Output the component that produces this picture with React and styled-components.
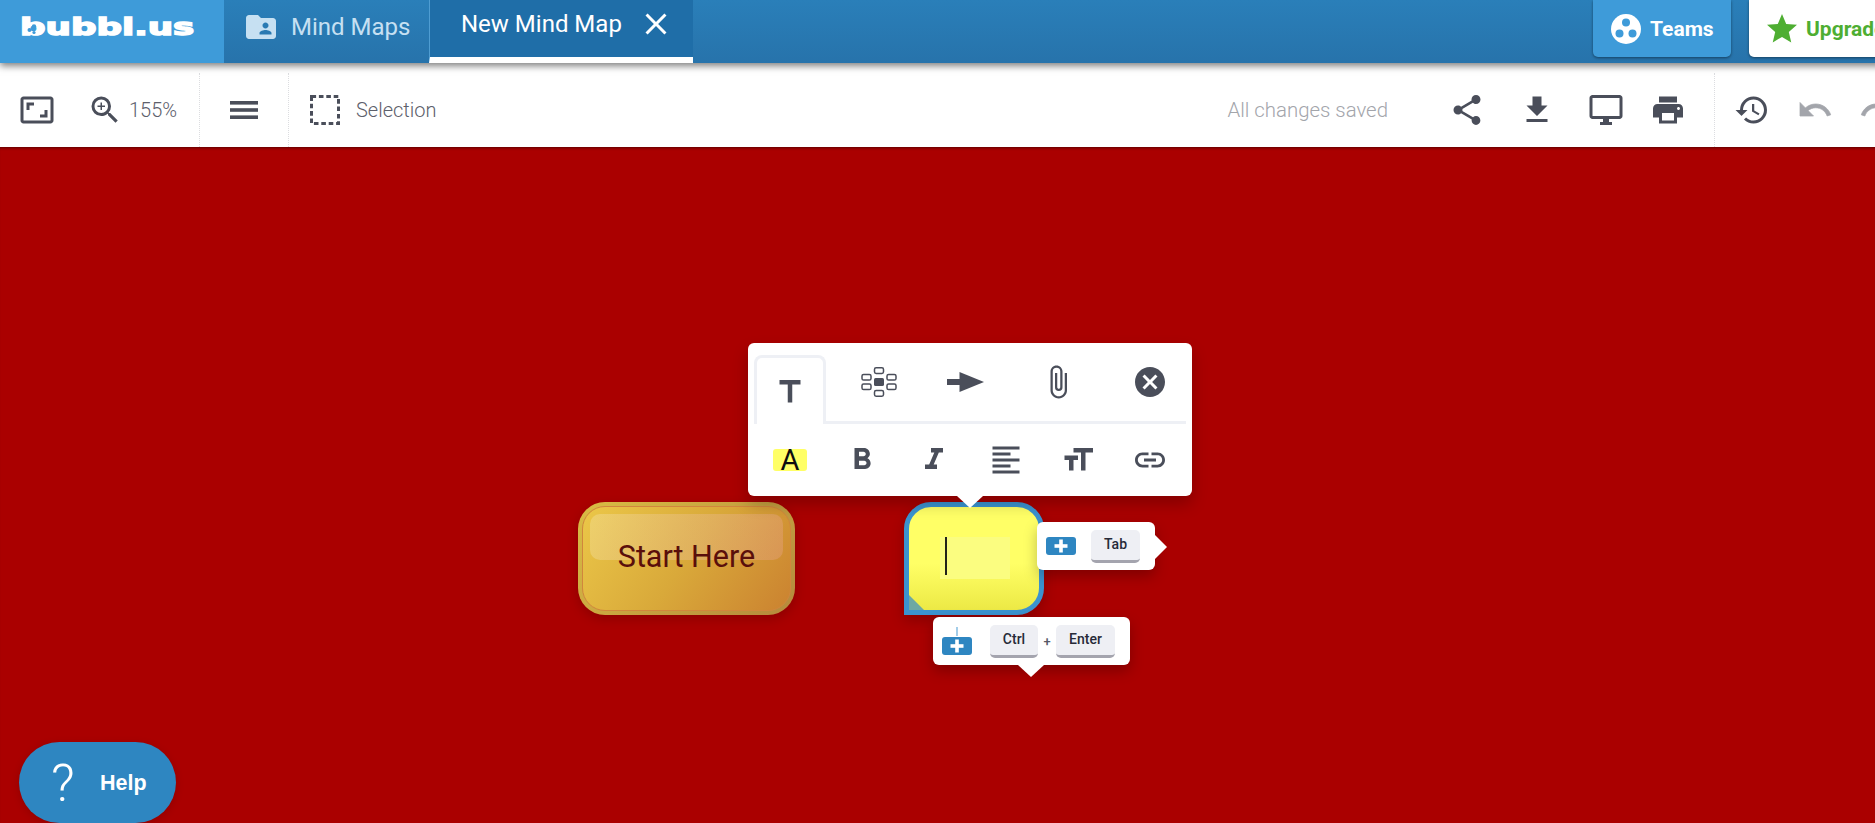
import React from 'react';
import styled, { createGlobalStyle } from 'styled-components';
import {
  MdAspectRatio,
  MdAttachFile,
  MdCancel,
  MdClose,
  MdFileDownload,
  MdFolderShared,
  MdFormatAlignLeft,
  MdFormatBold,
  MdFormatItalic,
  MdFormatSize,
  MdHistory,
  MdLink,
  MdOutlineDesktopWindows,
  MdPrint,
  MdShare,
  MdStar,
  MdTitle,
  MdZoomIn,
} from 'react-icons/md';

const GlobalStyle = createGlobalStyle`
    html, body {
        margin: 0;
        height: 100%;
        overflow: hidden;
        font-family: Roboto, "Liberation Sans", sans-serif;
    }
    #root {
        height: 100%;
    }
`;

const Page = styled.div`
    display: flex;
    flex-direction: column;
    height: 100vh;
    overflow: hidden;
`;

// header
const Header = styled.header`
    position: relative;
    z-index: 2;
    display: flex;
    flex: 0 0 63px;
    width: calc(100% + 44px);
    background: linear-gradient(#2a7fb9, #2773ab);
    box-shadow: 0 3px 7px rgba(0, 0, 0, 0.5);
`;

const LogoCell = styled.div`
    position: relative;
    display: flex;
    align-items: center;
    flex: 0 0 224px;
    padding-left: 20px;
    box-sizing: border-box;
    background: #3e9bd9;
`;

const LogoText = styled.span`
    display: inline-block;
    font-family: "DejaVu Sans", sans-serif;
    font-weight: 700;
    font-size: 23px;
    line-height: 1;
    color: #fff;
    -webkit-text-stroke: 1.4px #fff;
    transform: scaleX(1.55);
    transform-origin: left center;
    margin-top: -8px;
`;

const LogoBubbles = styled.svg`
    position: absolute;
    left: 26px;
    top: 24px;
    width: 12px;
    height: 11px;
`;

const MapsTab = styled.div`
    display: flex;
    align-items: center;
    flex: 0 0 205px;
    box-sizing: border-box;
    padding-left: 19px;
    padding-bottom: 9px;
    color: #c6e0f2;
    font-size: 24px;
    gap: 12px;
`;

const ActiveTab = styled.div`
    display: flex;
    align-items: center;
    flex: 0 0 264px;
    box-sizing: border-box;
    padding: 0 0 9px 31px;
    background: #1f6ea8;
    border-left: 1px solid #4f9dd2;
    border-bottom: 6px solid #fff;
    color: #fff;
    font-size: 24px;
    gap: 16px;
`;

const HeaderSpacer = styled.div`
    flex: 1;
`;

const HeaderButton = styled.div`
    display: flex;
    align-items: center;
    flex: 0 0 ${(p) => p.$width}px;
    box-sizing: border-box;
    height: 57px;
    margin-left: 18px;
    padding-left: ${(p) => p.$pad}px;
    gap: ${(p) => p.$gap}px;
    border-radius: 0 0 5px 5px;
    background: ${(p) => (p.$light ? '#fff' : '#3e9bd9')};
    color: ${(p) => (p.$light ? '#4eae32' : '#fff')};
    box-shadow: 0 1px 3px rgba(0, 0, 0, 0.45);
    font-weight: 700;
    font-size: 21px;
`;

const TeamsBadge = styled.svg`
    width: 30px;
    height: 30px;
`;

// toolbar
const Toolbar = styled.div`
    position: relative;
    z-index: 1;
    display: flex;
    flex: 0 0 84px;
    width: calc(100% + 20px);
    padding-top: 10px;
    box-sizing: border-box;
    background: #fff;
    color: #4a4e5a;
`;

const ToolGroup = styled.div`
    display: flex;
    align-items: center;
    flex: 0 0 auto;
    box-sizing: border-box;
    width: ${(p) => (p.$width ? `${p.$width}px` : 'auto')};
    padding-left: ${(p) => p.$pad || 0}px;
    border-right: ${(p) => (p.$divider ? '1px dotted #dcdde0' : 'none')};
`;

const ToolIcon = styled.svg`
    flex: 0 0 auto;
    width: 36px;
    height: 36px;
    margin-left: ${(p) => p.$ml || 0}px;
    color: ${(p) => p.$color || 'inherit'};
`;

const ToolLabel = styled.span`
    margin-left: ${(p) => p.$ml}px;
    font-size: 20px;
    font-weight: 300;
    color: #5d606b;
`;

const SaveStatus = styled.span`
    margin-left: auto;
    margin-right: 36px;
    align-self: center;
    font-size: 20.4px;
    font-weight: 300;
    color: #a3a5ab;
`;

const SelectionBox = styled.svg`
    flex: 0 0 auto;
    width: 30px;
    height: 30px;
`;

// canvas
const Canvas = styled.main`
    position: relative;
    flex: 1;
    overflow: hidden;
    background: #aa0000;
    box-shadow: inset 0 3px 3px -2px rgba(0, 0, 0, 0.45);
`;

const StartNode = styled.div`
    position: absolute;
    left: 578px;
    top: 355px;
    width: 217px;
    height: 113px;
    box-sizing: border-box;
    padding: 4px;
    border-radius: 27px;
    background: linear-gradient(135deg, #d9bc44, #b5893c);
    box-shadow: 0 4px 12px rgba(0, 0, 0, 0.18);
`;

const StartFace = styled.div`
    position: relative;
    display: flex;
    align-items: center;
    justify-content: center;
    height: 100%;
    border-radius: 23px;
    box-sizing: border-box;
    border: 1px solid #d1863c;
    background: linear-gradient(125deg, #ebc748 0%, #d9a93a 50%, #cb8230 100%);
    color: #5a0f0b;
    font-size: 30.5px;
    padding-bottom: 4px;
`;

const StartGloss = styled.div`
    position: absolute;
    left: 7px;
    right: 7px;
    top: 7px;
    height: 46px;
    border-radius: 10px;
    background: linear-gradient(90deg, rgba(255, 255, 255, 0.2), rgba(240, 170, 170, 0.28));
`;

const StartLabel = styled.span`
    position: relative;
`;

const EditNode = styled.div`
    position: absolute;
    left: 904px;
    top: 355px;
    width: 140px;
    height: 113px;
    box-sizing: border-box;
    border: 5px solid #3b93cf;
    border-radius: 27px 27px 27px 0;
    background: linear-gradient(#ffff66 0%, #ffff66 55%, #ece945 100%);
    overflow: hidden;
    box-shadow: 0 6px 14px rgba(0, 0, 0, 0.2);
`;

const EditField = styled.div`
    position: absolute;
    left: 31px;
    top: 30px;
    width: 70px;
    height: 42px;
    background: #fbfd80;
`;

const Caret = styled.div`
    width: 2px;
    height: 38px;
    margin-left: 5px;
    background: #22221a;
`;

const ResizeCorner = styled.div`
    position: absolute;
    left: 0;
    bottom: 0;
    width: 0;
    height: 0;
    border-style: solid;
    border-width: 15px 0 0 15px;
    border-color: transparent transparent transparent #6da8a3;
`;

const Popup = styled.div`
    position: absolute;
    z-index: 3;
    left: 748px;
    top: 196px;
    width: 444px;
    height: 153px;
    box-sizing: border-box;
    padding: 12px 6px 0;
    border-radius: 6px;
    background: #fff;
    color: #4a4e5a;
    box-shadow: 0 8px 16px rgba(0, 0, 0, 0.22);
`;

const Pointer = styled.div`
    position: absolute;
    width: 0;
    height: 0;
    border-style: solid;
    border-color: transparent;
    ${(p) =>
      p.$right
        ? `
        right: -12px;
        top: 13px;
        border-width: 12px 0 12px 12px;
        border-left-color: #fff;
    `
        : `
        left: ${p.$left}px;
        bottom: -12px;
        border-width: 12px 13px 0;
        border-top-color: #fff;
    `}
`;

const TabRow = styled.div`
    display: grid;
    grid-template-columns: repeat(5, 72px);
    column-gap: 18px;
    height: 69px;
    border-bottom: 3px solid #eef0f5;
    box-sizing: border-box;
`;

const PopupTab = styled.div`
    display: flex;
    align-items: center;
    justify-content: center;
    box-sizing: border-box;
    height: 66px;
    padding-bottom: 12px;
    margin-left: ${(p) => p.$nudge || 0}px;
    ${(p) =>
      p.$active &&
      `
        position: relative;
        height: 69px;
        padding-bottom: 0;
        padding-top: 1px;
        background: #fff;
        border: 3px solid #eef0f5;
        border-bottom: none;
        border-radius: 8px 8px 0 0;
    `}
`;

const FormatRow = styled.div`
    display: grid;
    grid-template-columns: repeat(6, 72px);
    height: 72px;
`;

const FormatCell = styled.div`
    display: flex;
    align-items: center;
    justify-content: center;
`;

const ColorSwatch = styled.span`
    display: flex;
    align-items: center;
    justify-content: center;
    width: 34px;
    height: 22px;
    border-radius: 3px;
    background: #ffff66;
    color: #0c0c10;
    font-size: 29px;
    font-weight: 400;
    line-height: 22px;
`;

const HintTip = styled.div`
    position: absolute;
    z-index: 3;
    display: flex;
    align-items: center;
    box-sizing: border-box;
    left: ${(p) => p.$x}px;
    top: ${(p) => p.$y}px;
    width: ${(p) => p.$width}px;
    height: 48px;
    padding-left: 9px;
    border-radius: 6px;
    background: #fff;
    box-shadow: 0 6px 14px rgba(0, 0, 0, 0.25);
`;

const PlusBadge = styled.span`
    position: relative;
    display: flex;
    align-items: center;
    justify-content: center;
    width: 30px;
    height: 18px;
    border-radius: 3px;
    background: #2e86c1;
    color: #fff;
    ${(p) =>
      p.$stem &&
      `
        margin-top: 10px;
        &::before {
            content: '';
            position: absolute;
            left: 14px;
            top: -10px;
            width: 2px;
            height: 9px;
            background: #a3cde9;
        }
    `}
`;

const Key = styled.span`
    display: flex;
    align-items: center;
    justify-content: center;
    box-sizing: border-box;
    width: ${(p) => p.$width}px;
    height: 33px;
    margin-left: ${(p) => p.$ml}px;
    padding-bottom: 2px;
    border-radius: 5px;
    border-bottom: 3px solid #a4a4ae;
    background: #eeeff4;
    color: #262a38;
    font-size: 14px;
    font-weight: 500;
`;

const KeyJoin = styled.span`
    width: 18px;
    text-align: center;
    font-size: 13px;
    font-weight: 500;
    color: #555866;
`;

const HelpButton = styled.div`
    position: absolute;
    z-index: 3;
    left: 19px;
    top: 595px;
    display: flex;
    align-items: center;
    box-sizing: border-box;
    width: 157px;
    height: 81px;
    padding-left: 32px;
    border-radius: 41px;
    background: #2e86c1;
    color: #fff;
    box-shadow: 0 2px 8px rgba(0, 0, 0, 0.15);
`;

const HelpMark = styled.span`
    width: 49px;
    padding-top: 3px;
    font-size: 52px;
    font-weight: 300;
    line-height: 1;
`;

const HelpLabel = styled.span`
    font-family: "Liberation Sans", Arial, sans-serif;
    font-size: 21.5px;
    font-weight: 700;
    padding-top: 1px;
`;

const PlusGlyph = () => (
  <svg width="14" height="14" viewBox="0 0 14 14" fill="currentColor">
    <rect x="5.2" y="0.5" width="3.6" height="13" />
    <rect x="0.5" y="5.2" width="13" height="3.6" />
  </svg>
);

const MapIcon = () => (
  <svg width="36" height="30" viewBox="0 0 36 30" fill="none" stroke="currentColor" strokeWidth="1.5">
    <rect x="13.5" y="0.8" width="9" height="5.6" rx="1.6" />
    <rect x="13.5" y="23.6" width="9" height="5.6" rx="1.6" />
    <rect x="1" y="7.4" width="9" height="5.6" rx="1.6" />
    <rect x="1" y="17" width="9" height="5.6" rx="1.6" />
    <rect x="26" y="7.4" width="9" height="5.6" rx="1.6" />
    <rect x="26" y="17" width="9" height="5.6" rx="1.6" />
    <rect x="13" y="11" width="10" height="8" rx="1.6" fill="currentColor" stroke="none" />
  </svg>
);

const ArrowIcon = () => (
  <svg width="37" height="20" viewBox="0 0 37 20" fill="currentColor">
    <rect x="0" y="7" width="14" height="6" />
    <path d="M12.500 0 L37 10 L12.500 20 Z" />
  </svg>
);

const MenuBars = (props) => (
  <svg viewBox="0 0 36 36" fill="currentColor" {...props}>
    <rect x="4" y="9" width="28" height="3.600" />
    <rect x="4" y="16.200" width="28" height="3.600" />
    <rect x="4" y="23.400" width="28" height="3.600" />
  </svg>
);

// the history arrows sit heavier in the reference than the stock icons
const UndoGlyph = (props) => (
  <svg viewBox="0 0 24 24" fill="currentColor" stroke="currentColor" strokeWidth="0.5" {...props}>
    <path d="M12.500 8c-2.650 0-5.050.990-6.900 2.600L2 7v9h9l-3.620-3.620c1.390-1.160 3.160-1.880 5.120-1.880 3.540 0 6.550 2.310 7.600 5.500l2.370-.780C21.080 11.030 17.150 8 12.500 8z" />
  </svg>
);

const RedoGlyph = (props) => (
  <svg viewBox="0 0 24 24" fill="currentColor" stroke="currentColor" strokeWidth="0.5" {...props}>
    <path d="M18.400 10.600C16.550 8.990 14.150 8 11.500 8c-4.650 0-8.580 3.030-9.960 7.220L3.900 16c1.050-3.190 4.050-5.500 7.600-5.500 1.950 0 3.730.720 5.120 1.880L13 16h9V7l-3.600 3.600z" />
  </svg>
);

const App = () => {
  return (
    <Page>
      <GlobalStyle />
      <Header>
        <LogoCell>
          <LogoText>bubbl.us</LogoText>
          <LogoBubbles viewBox="0 0 12 11" fill="#3e9bd9">
            <circle cx="8" cy="2.500" r="2.200" />
            <circle cx="3.500" cy="6" r="2" />
            <circle cx="8" cy="8.500" r="1.600" />
          </LogoBubbles>
        </LogoCell>
        <MapsTab>
          <MdFolderShared size={36} />
          Mind Maps
        </MapsTab>
        <ActiveTab>
          New Mind Map
          <MdClose size={36} />
        </ActiveTab>
        <HeaderSpacer />
        <HeaderButton $width={138} $pad={18} $gap={9}>
          <TeamsBadge viewBox="0 0 30 30">
            <circle cx="15" cy="15" r="15" fill="#fff" />
            <circle cx="15" cy="8.500" r="4" fill="#3e9bd9" />
            <circle cx="8.500" cy="19.500" r="4" fill="#3e9bd9" />
            <circle cx="21.500" cy="19.500" r="4" fill="#3e9bd9" />
          </TeamsBadge>
          Teams
        </HeaderButton>
        <HeaderButton $light $width={170} $pad={15} $gap={6}>
          <MdStar size={36} />
          Upgrade
        </HeaderButton>
      </Header>

      <Toolbar>
        <ToolGroup $width={200} $pad={19} $divider>
          <ToolIcon as={MdAspectRatio} />
          <ToolIcon as={MdZoomIn} $ml={32} />
          <ToolLabel $ml={6}>155%</ToolLabel>
        </ToolGroup>
        <ToolGroup $width={89} $pad={26} $divider>
          <ToolIcon as={MenuBars} />
        </ToolGroup>
        <ToolGroup $pad={21}>
          <SelectionBox viewBox="0 0 30 30" fill="none" stroke="currentColor" strokeWidth="3" strokeDasharray="4.600 2.800">
            <rect x="1.500" y="1.500" width="27" height="27" />
          </SelectionBox>
          <ToolLabel $ml={16}>Selection</ToolLabel>
        </ToolGroup>
        <SaveStatus>All changes saved</SaveStatus>
        <ToolGroup $width={291} $pad={25} $divider>
          <ToolIcon as={MdShare} />
          <ToolIcon as={MdFileDownload} $ml={34} />
          <ToolIcon as={MdOutlineDesktopWindows} $ml={33} />
          <ToolIcon as={MdPrint} $ml={26} />
        </ToolGroup>
        <ToolGroup $pad={19}>
          <ToolIcon as={MdHistory} />
          <ToolIcon as={UndoGlyph} $ml={27} $color="#a3a5ab" />
          <ToolIcon as={RedoGlyph} $ml={26} $color="#a3a5ab" />
        </ToolGroup>
      </Toolbar>

      <Canvas>
        <StartNode>
          <StartFace>
            <StartGloss />
            <StartLabel>Start Here</StartLabel>
          </StartFace>
        </StartNode>

        <EditNode>
          <EditField>
            <Caret />
          </EditField>
          <ResizeCorner />
        </EditNode>

        <Popup>
          <TabRow>
            <PopupTab $active>
              <MdTitle size={36} />
            </PopupTab>
            <PopupTab $nudge={-2}>
              <MapIcon />
            </PopupTab>
            <PopupTab $nudge={-10}>
              <ArrowIcon />
            </PopupTab>
            <PopupTab $nudge={-4}>
              <MdAttachFile size={36} />
            </PopupTab>
            <PopupTab>
              <MdCancel size={36} />
            </PopupTab>
          </TabRow>
          <FormatRow>
            <FormatCell>
              <ColorSwatch>A</ColorSwatch>
            </FormatCell>
            <FormatCell>
              <MdFormatBold size={36} />
            </FormatCell>
            <FormatCell>
              <MdFormatItalic size={36} />
            </FormatCell>
            <FormatCell>
              <MdFormatAlignLeft size={36} />
            </FormatCell>
            <FormatCell>
              <MdFormatSize size={36} />
            </FormatCell>
            <FormatCell>
              <MdLink size={36} />
            </FormatCell>
          </FormatRow>
          <Pointer $left={209} />
        </Popup>

        <HintTip $x={1037} $y={375} $width={118}>
          <PlusBadge>
            <PlusGlyph />
          </PlusBadge>
          <Key $width={49} $ml={15}>Tab</Key>
          <Pointer $right />
        </HintTip>

        <HintTip $x={933} $y={470} $width={197}>
          <PlusBadge $stem>
            <PlusGlyph />
          </PlusBadge>
          <Key $width={48} $ml={18}>Ctrl</Key>
          <KeyJoin>+</KeyJoin>
          <Key $width={59} $ml={0}>Enter</Key>
          <Pointer $left={85} />
        </HintTip>

        <HelpButton>
          <HelpMark>?</HelpMark>
          <HelpLabel>Help</HelpLabel>
        </HelpButton>
      </Canvas>
    </Page>
  );
};

export default App;
